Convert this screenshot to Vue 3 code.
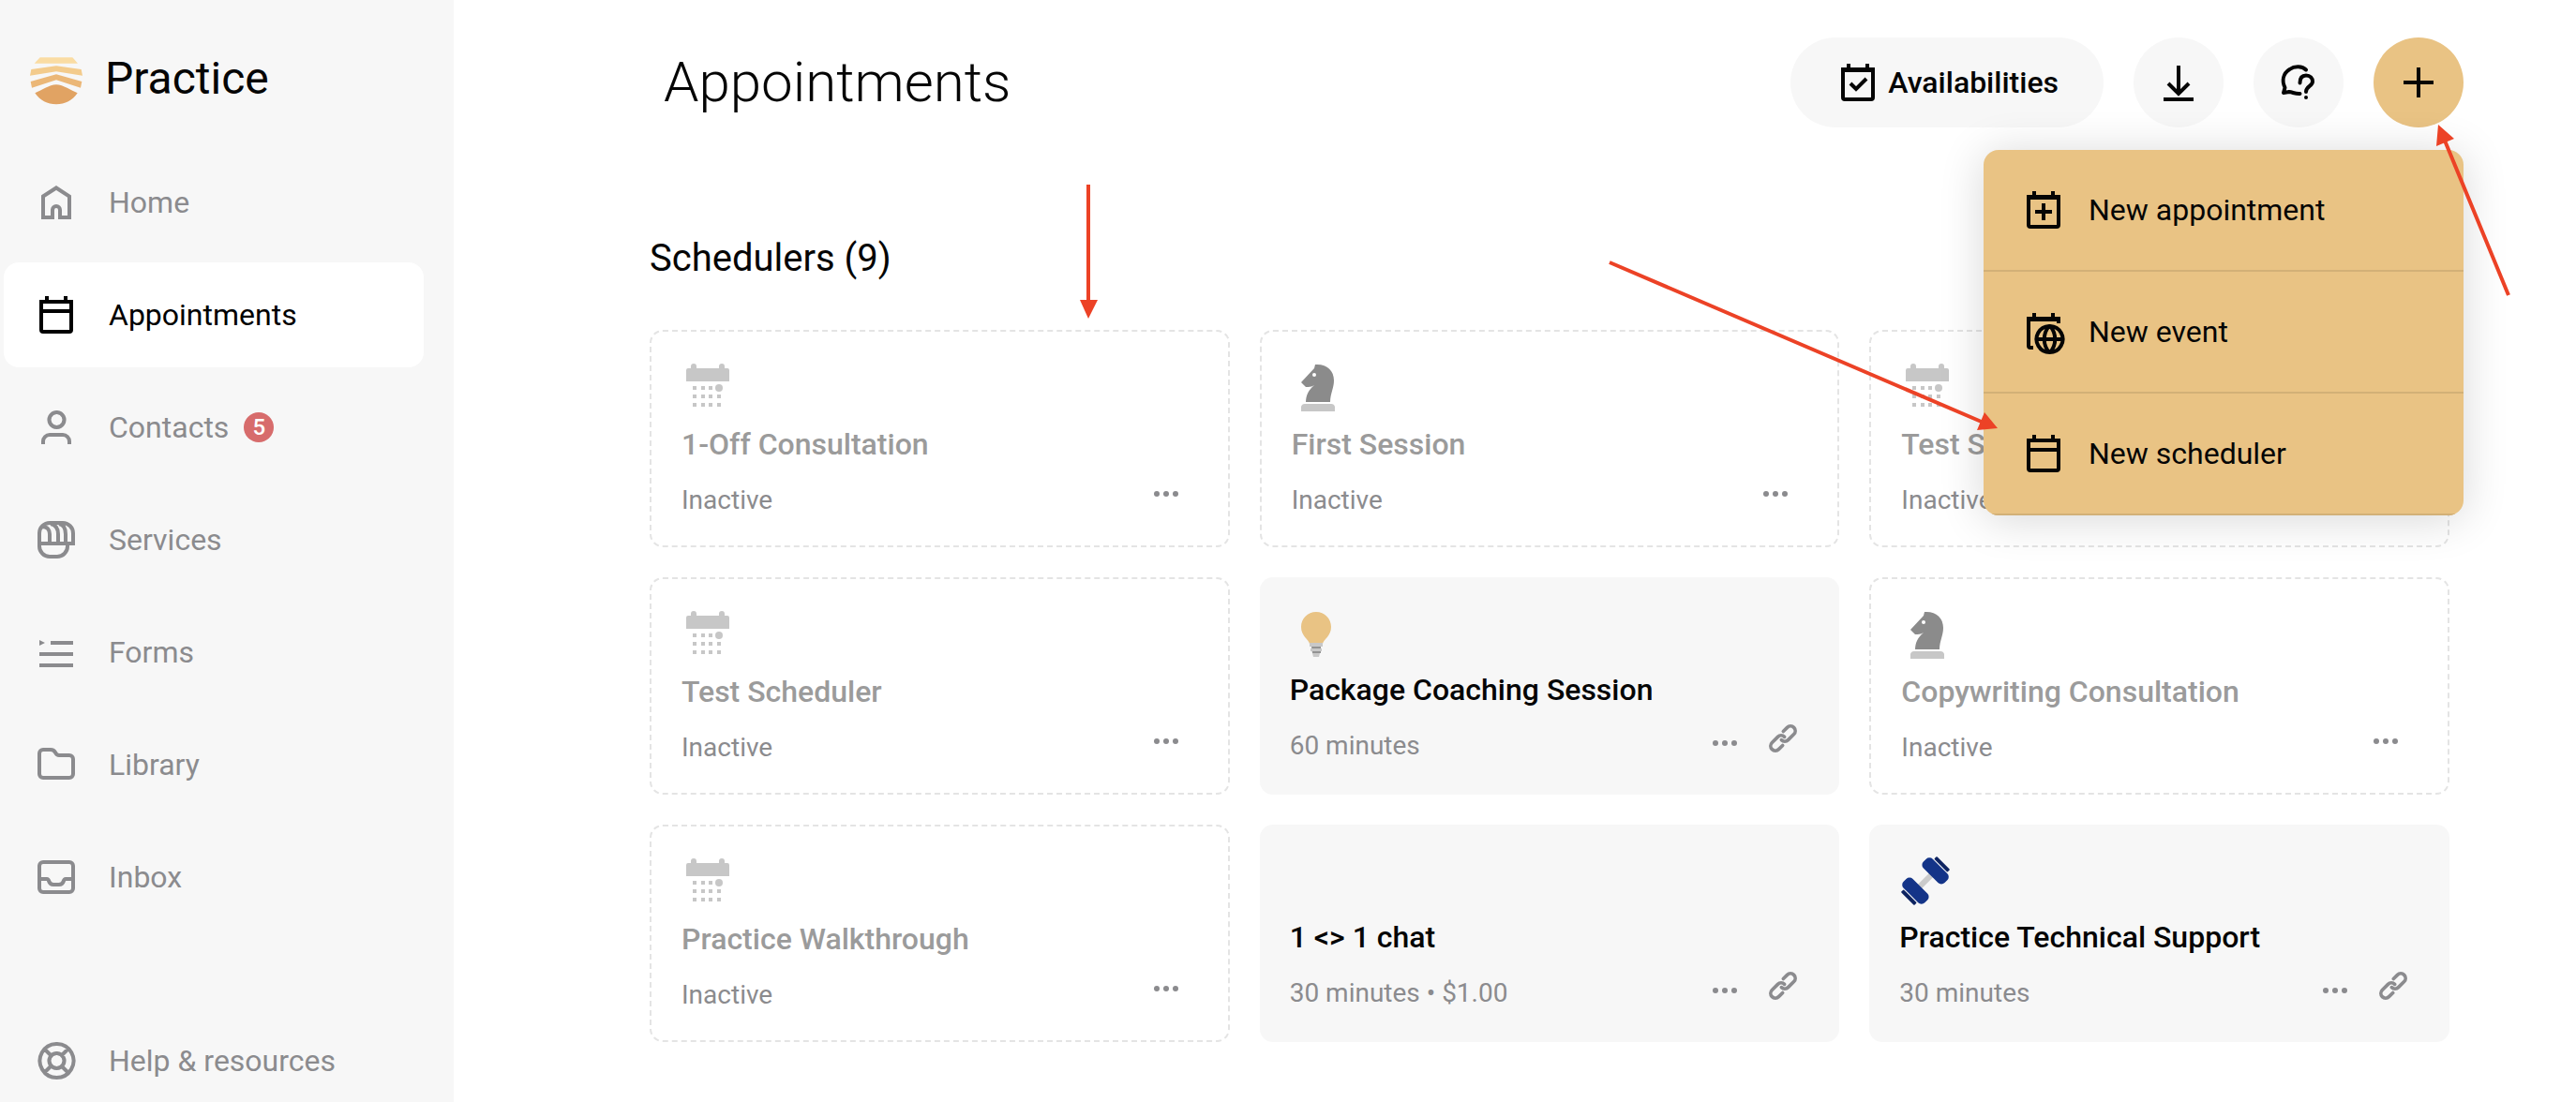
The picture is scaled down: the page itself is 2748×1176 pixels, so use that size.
<script setup>
const navItems = [
  { icon: 'home', label: 'Home' },
  { icon: 'calendar', label: 'Appointments', active: true },
  { icon: 'person', label: 'Contacts', badge: 5 },
  { icon: 'services', label: 'Services' },
  { icon: 'forms', label: 'Forms' },
  { icon: 'folder', label: 'Library' },
  { icon: 'inbox', label: 'Inbox' },
]

const menuItems = [
  { icon: 'calendar-plus', label: 'New appointment' },
  { icon: 'calendar-globe', label: 'New event' },
  { icon: 'calendar', label: 'New scheduler' },
]

const schedulers = [
  { title: '1-Off Consultation', meta: 'Inactive', icon: 'month' },
  { title: 'First Session', meta: 'Inactive', icon: 'knight' },
  { title: 'Test Scheduler', meta: 'Inactive', icon: 'month' },
  { title: 'Test Scheduler', meta: 'Inactive', icon: 'month' },
  { title: 'Package Coaching Session', meta: '60 minutes', icon: 'bulb', active: true },
  { title: 'Copywriting Consultation', meta: 'Inactive', icon: 'knight' },
  { title: 'Practice Walkthrough', meta: 'Inactive', icon: 'month' },
  { title: '1 <> 1 chat', meta: '30 minutes • $1.00', icon: '', active: true },
  { title: 'Practice Technical Support', meta: '30 minutes', icon: 'dumbbell', active: true },
]

// Line icons on a 48-unit grid, drawn with a 4-unit stroke.
const glyphs = {
  home: 'M10 17.5 24 8.5 38 17.5V40H28V32a4 4 0 0 0-8 0V40H10Z',
  calendar: 'M8 10H40V40a2 2 0 0 1-2 2H10a2 2 0 0 1-2-2ZM8 20H40M14 4V10M34 4V10',
  'calendar-check': 'M8 10H40V40a2 2 0 0 1-2 2H10a2 2 0 0 1-2-2ZM8 11H40M14 4V10M34 4V10M16 25 22 31 33 20',
  'calendar-plus': 'M8 10H40V40a2 2 0 0 1-2 2H10a2 2 0 0 1-2-2ZM8 11H40M14 4V10M34 4V10M24 17V35M15 26H33',
  'calendar-globe':
    'M40 15V10H8V39a2 2 0 0 0 2 2H13M8 11H40M14 4V10M34 4V10M30 18a14 14 0 1 0 1 0ZM16 32H44M30 18c-7 8-7 20 0 28M31 18c7 8 7 20 0 28',
  person: 'M24 8a8 8 0 1 0 1 0ZM10 42V39a7 7 0 0 1 7-7H31a7 7 0 0 1 7 7V42',
  services:
    'M38 28H6V17A11 11 0 0 1 17 6H31A11 11 0 0 1 42 17V28H36V31a11 11 0 0 1-11 11H17A11 11 0 0 1 6 31V17M9 10c6 0 8 4 8 8V27M18 7c5 1 8 5 8 11V27M27 7c5 1 7 5 7 11V27',
  forms: 'M18 14H42M6 26H42M6 38H42',
  folder: 'M6 12a4 4 0 0 1 4-4H18c3 0 4 1 5 3s2 3 4 3H38a4 4 0 0 1 4 4V34a4 4 0 0 1-4 4H10a4 4 0 0 1-4-4Z',
  inbox:
    'M10 8H38a4 4 0 0 1 4 4V36a4 4 0 0 1-4 4H10a4 4 0 0 1-4-4V12a4 4 0 0 1 4-4ZM6 26H14c1 0 2 1 2 2 1 3 3 4 5 4H27c2 0 4-1 5-4 0-1 1-2 2-2H42',
  help: 'M24 6a18 18 0 1 0 1 0ZM24 16a8 8 0 1 0 1 0ZM12 12 18 18M36 12 30 18M12 36 18 30M36 36 30 30',
  download: 'M24 6V35M13 25 24 36 35 25M8 42H40',
  question:
    'M32 10.5C28 6.5 20 6 14.5 10C7.5 14.5 6 22 9.5 29.5L8 35 14 34C18 34.5 21 36.5 25.5 36M25.5 24.5C25.5 19 28 16.5 32 16.5C36.5 16.5 39 19.5 39 23C39 28 32 28 32 34',
  plus: 'M24 8V40M8 24H40',
  link: 'M18 29.5H11.5A5.5 5.5 0 0 1 11.5 18.5H21A5.5 5.5 0 0 1 26.5 24M30 18.5H36.5A5.5 5.5 0 0 1 36.5 29.5H27A5.5 5.5 0 0 1 21.5 24',
}
</script>

<template>
  <div class="app">
    <aside class="sidebar">
      <a class="brand" href="#">
        <svg class="brand-mark" viewBox="96 184 168 154" preserveAspectRatio="xMidYMax meet" aria-hidden="true">
          <path d="M110 205 128 186H232L249 205Z" fill="#fadca3" />
          <path d="M100 224 180 213 260 224 264 244 180 231 96 244Z" fill="#f3cb8c" />
          <path d="M98 263 180 240 262 263 258 283 180 258 102 283Z" fill="#ebb777" />
          <path d="M112 300C132 292 158 273 180 273S228 292 248 300C232 324 208 336 180 336S128 324 112 300Z" fill="#e1a363" />
        </svg>
        <span>Practice</span>
      </a>
      <nav class="nav">
        <a v-for="item in navItems" :key="item.label" href="#" class="nav-item" :class="{ current: item.active }">
          <svg class="icon" viewBox="0 0 48 48" aria-hidden="true">
            <path :d="glyphs[item.icon]" />
            <path v-if="item.icon === 'forms'" class="dot" d="M6 11V17L12 14Z" />
          </svg>
          <span>{{ item.label }}</span>
          <span v-if="item.badge" class="badge">{{ item.badge }}</span>
        </a>
      </nav>
      <a href="#" class="nav-item help">
        <svg class="icon" viewBox="0 0 48 48" aria-hidden="true"><path :d="glyphs.help" /></svg>
        <span>Help &amp; resources</span>
      </a>
    </aside>

    <main class="main">
      <header class="topbar">
        <h1>Appointments</h1>
        <div class="actions">
          <button type="button" class="pill">
            <svg class="icon" viewBox="0 0 48 48" aria-hidden="true"><path :d="glyphs['calendar-check']" /></svg>
            Availabilities
          </button>
          <button type="button" class="round" aria-label="Download">
            <svg class="icon" viewBox="0 0 48 48" aria-hidden="true"><path :d="glyphs.download" /></svg>
          </button>
          <button type="button" class="round" aria-label="Ask a question">
            <svg class="icon soft" viewBox="0 0 48 48" aria-hidden="true">
              <path :d="glyphs.question" />
              <circle class="dot" cx="32" cy="40" r="2" />
            </svg>
          </button>
          <div class="create">
            <button type="button" class="round accent" aria-label="Create" aria-expanded="true">
              <svg class="icon" viewBox="0 0 48 48" aria-hidden="true"><path :d="glyphs.plus" /></svg>
            </button>
            <div class="menu">
              <button v-for="item in menuItems" :key="item.label" type="button" class="menu-item">
                <svg class="icon" viewBox="0 0 48 48" aria-hidden="true"><path :d="glyphs[item.icon]" /></svg>
                {{ item.label }}
              </button>
            </div>
          </div>
        </div>
      </header>

      <section class="schedulers">
        <h2>Schedulers (9)</h2>
        <div class="grid">
          <article v-for="(card, i) in schedulers" :key="i" class="card" :class="{ active: card.active }">
            <svg class="card-icon" viewBox="0 0 56 56" aria-hidden="true">
              <g v-if="card.icon === 'month'" fill="#c7c7c7">
                <path d="M5 9a2 2 0 0 1 2-2H10V5a3 3 0 0 1 6 0V7H40V5a3 3 0 0 1 6 0V7H49a2 2 0 0 1 2 2V21H5Z" />
                <path d="M14 26V48M23 26V48M31 26V48M40 35V48" fill="none" stroke="#c7c7c7" stroke-width="4" stroke-dasharray="4 5" />
                <circle cx="40" cy="28" r="4" />
              </g>
              <g v-else-if="card.icon === 'knight'">
                <path d="M25 3C37 2 45 9 45 20C45 28 41 34 41 43H15C15 36 18 30 24 25C21 27 18 27 15 27L10 22L24 7Z" fill="#8b8b8b" />
                <circle cx="24" cy="14" r="2" fill="#fff" />
                <path d="M10 53V48a4 4 0 0 1 4-3H42a4 4 0 0 1 4 3V53Z" fill="#c7c7c7" />
              </g>
              <g v-else-if="card.icon === 'bulb'">
                <path d="M28 5C37 5 44 12 44 21C44 31 36 34 35 39H21C20 34 12 31 12 21C12 12 19 5 28 5Z" fill="#e9c384" />
                <path d="M23 42H33V49H24Z" fill="#939393" />
                <path d="M21 38H35V42H21ZM22 44H34V47H22ZM24 49H32L31 53H25Z" fill="#c8c8c8" />
              </g>
              <g v-else-if="card.icon === 'dumbbell'" transform="rotate(-45 28 28)">
                <rect x="14" y="25" width="28" height="6" fill="#cbcbcb" />
                <rect x="6" y="12" width="14" height="32" rx="5" fill="#143488" />
                <rect x="36" y="12" width="14" height="32" rx="5" fill="#143488" />
                <rect x="1" y="18" width="4" height="20" rx="1" fill="#0d2360" />
                <rect x="51" y="18" width="4" height="20" rx="1" fill="#0d2360" />
              </g>
            </svg>
            <h3>{{ card.title }}</h3>
            <div class="card-foot">
              <p>{{ card.meta }}</p>
              <div class="card-actions">
                <button type="button" class="plain" aria-label="More options">
                  <svg class="icon" viewBox="0 0 48 48" aria-hidden="true">
                    <circle class="dot" cx="14" cy="24" r="3" />
                    <circle class="dot" cx="24" cy="24" r="3" />
                    <circle class="dot" cx="34" cy="24" r="3" />
                  </svg>
                </button>
                <button v-if="card.active" type="button" class="plain link" aria-label="Copy link">
                  <svg class="icon soft" viewBox="0 0 48 48" aria-hidden="true">
                    <path :d="glyphs.link" transform="rotate(-45 24 24)" />
                  </svg>
                </button>
              </div>
            </div>
          </article>
        </div>
      </section>
    </main>

    <svg class="annotations" width="2748" height="1176" viewBox="0 0 2748 1176" aria-hidden="true">
      <path d="M1161 197V322M1717 280 2116 451M2676 315 2608 150" />
      <path class="head" d="M1152 320H1171L1161 340ZM2117 440 2131 457 2109 459ZM2601 133 2618 148 2599 156Z" />
    </svg>
  </div>
</template>

<style>
body {
  margin: 0;
  background: #fff;
}
</style>

<style scoped>
.app {
  position: relative;
  display: flex;
  min-height: 100vh;
  overflow: hidden;
  color: #050505;
  font-family: Roboto, "Liberation Sans", sans-serif;
  font-size: 32px;
  line-height: 40px;
}

h1,
h2,
h3,
p {
  margin: 0;
}

a {
  color: inherit;
  text-decoration: none;
}

button {
  border: 0;
  padding: 0;
  color: inherit;
  background: none;
  font: inherit;
}

.icon {
  display: block;
  flex: none;
  width: 48px;
  height: 48px;
  fill: none;
  stroke: currentColor;
  stroke-width: 4px;
}

.soft {
  stroke-linecap: round;
  stroke-linejoin: round;
}

.dot {
  fill: currentColor;
  stroke: none;
}

.sidebar {
  display: flex;
  flex: none;
  flex-direction: column;
  box-sizing: border-box;
  width: 484px;
  background: #f7f7f7;
  color: #8b8b8e;
}

.brand {
  display: flex;
  align-items: center;
  gap: 24px;
  padding: 56px 32px 48px;
  color: #050505;
  font-size: 48px;
  line-height: 56px;
}

.brand-mark {
  width: 56px;
  height: 56px;
}

.nav {
  display: flex;
  flex-direction: column;
  gap: 8px;
}

.nav-item {
  display: flex;
  align-items: center;
  gap: 32px;
  height: 112px;
  margin: 0 32px 0 4px;
  padding-left: 32px;
  border-radius: 16px;
}

.current {
  background: #fff;
  color: #000;
}

.badge {
  width: 32px;
  margin-left: -16px;
  border-radius: 16px;
  background: #d76c6c;
  color: #fff;
  font-size: 24px;
  font-weight: 500;
  line-height: 32px;
  text-align: center;
}

.help {
  height: 88px;
  margin-top: auto;
}

.main {
  flex: 1;
  min-width: 0;
}

.topbar {
  display: flex;
  align-items: center;
  justify-content: space-between;
  padding: 40px 120px 0 224px;
}

h1 {
  font-size: 60px;
  font-weight: 300;
  line-height: 72px;
}

.actions {
  display: flex;
  gap: 32px;
}

.pill {
  display: flex;
  align-items: center;
  gap: 8px;
  height: 96px;
  padding: 0 48px;
  border-radius: 48px;
  background: #f7f7f7;
  font-weight: 500;
}

.round {
  display: grid;
  place-items: center;
  width: 96px;
  height: 96px;
  border-radius: 50%;
  background: #f7f7f7;
}

.accent {
  background: #e9c384;
}

.create {
  position: relative;
}

.menu {
  position: absolute;
  z-index: 1;
  top: 120px;
  right: 0;
  width: 512px;
  overflow: hidden;
  border-radius: 16px;
  background: #e9c384;
  box-shadow: 0 4px 48px rgba(0, 0, 0, 0.16);
}

.menu-item {
  display: flex;
  align-items: center;
  gap: 24px;
  box-sizing: border-box;
  width: 100%;
  height: 130px;
  padding-left: 40px;
  border-bottom: 2px solid #d2b077;
}

.schedulers {
  padding: 112px 135px 64px 209px;
}

h2 {
  font-size: 40px;
  font-weight: 400;
  line-height: 56px;
}

.grid {
  display: grid;
  grid-template-columns: repeat(3, 1fr);
  gap: 32px;
  margin-top: 48px;
}

.card {
  box-sizing: border-box;
  height: 232px;
  padding: 32px;
  border: 2px dashed #e4e4e4;
  border-radius: 14px;
}

.card.active {
  border: 0;
  background: #f7f7f7;
}

.card-icon {
  display: block;
  width: 56px;
  height: 56px;
}

h3 {
  margin-top: 12px;
  color: #9b9b9b;
  font-size: 32px;
  font-weight: 500;
  line-height: 40px;
}

.active h3 {
  color: #050505;
}

.card-foot {
  display: flex;
  align-items: center;
  justify-content: space-between;
  height: 40px;
  margin-top: 20px;
  color: #8b8b8e;
}

.card-foot p {
  font-size: 28px;
}

.card-actions {
  display: flex;
  align-items: center;
  padding: 0 10px 14px 0;
}

.active .card-actions {
  gap: 16px;
  padding: 0 6px 6px 0;
}

.link {
  padding-bottom: 10px;
}

.link .icon {
  width: 44px;
  height: 44px;
}

.annotations {
  position: absolute;
  z-index: 2;
  top: 0;
  left: 0;
  fill: none;
  stroke: #ec4226;
  stroke-width: 4px;
  pointer-events: none;
}

.annotations .head {
  fill: #ec4226;
  stroke: none;
}
</style>
